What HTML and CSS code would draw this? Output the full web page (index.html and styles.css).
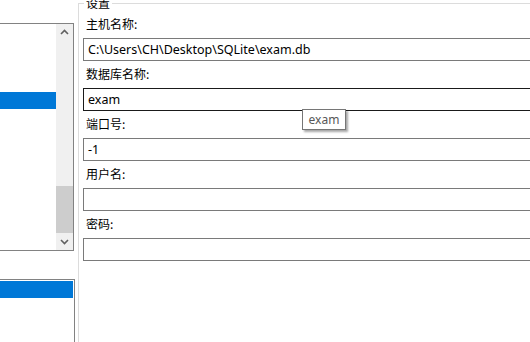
FILE: index.html
```html
<!DOCTYPE html>
<html lang="zh-CN">
<head>
    <meta charset="UTF-8">
    <meta name="viewport" content="width=device-width, initial-scale=1.0">
    <title>设置</title>
    <link rel="stylesheet" href="styles.css">
</head>
<body>
    <div class="window">
        <div class="left-panel">
            <div class="listbox top-list">
                <div class="list-items">
                    <div class="item selected"></div>
                </div>
                <div class="scrollbar">
                    <div class="scroll-btn">
                        <svg width="17" height="17" viewBox="0 0 17 17"><polyline points="5,10 8.5,6.5 12,10" fill="none" stroke="#606060" stroke-width="1.6"/></svg>
                    </div>
                    <div class="scroll-track"></div>
                    <div class="scroll-thumb"></div>
                    <div class="scroll-btn">
                        <svg width="17" height="17" viewBox="0 0 17 17"><polyline points="5,7 8.5,10.5 12,7" fill="none" stroke="#606060" stroke-width="1.6"/></svg>
                    </div>
                </div>
            </div>
            <div class="listbox bottom-list">
                <div class="item selected"></div>
            </div>
        </div>

        <fieldset class="settings">
            <legend>设置</legend>
            <div class="field">
                <label>主机名称:</label>
                <div class="input">C:\Users\CH\Desktop\SQLite\exam.db</div>
            </div>
            <div class="field">
                <label>数据库名称:</label>
                <div class="input focused">exam</div>
            </div>
            <div class="field">
                <label>端口号:</label>
                <div class="input">-1</div>
            </div>
            <div class="field">
                <label>用户名:</label>
                <div class="input"></div>
            </div>
            <div class="field">
                <label>密码:</label>
                <div class="input"></div>
            </div>
        </fieldset>

        <div class="tooltip">exam</div>
    </div>
</body>
</html>
```

FILE: styles.css
```css
body {
    margin: 0;
    padding: 0;
    background-color: #fff;
    font-family: "Noto Sans", "Noto Sans CJK SC", sans-serif;
    font-size: 12px;
    color: #000;
    overflow: hidden;
}

.window {
    position: relative;
    width: 530px;
    height: 342px;
    display: flex;
    overflow: hidden;
}

/* left side lists */
.left-panel {
    flex: 0 0 78px;
    display: flex;
    flex-direction: column;
    padding-top: 23px;
}

.listbox {
    width: 73px;
    border: 1px solid #828282;
    border-left: none;
    background-color: #fff;
}

.top-list {
    height: 226px;
    display: flex;
}

.list-items {
    flex: 1;
    padding-top: 68px;
}

.item {
    height: 17px;
}

.item.selected {
    background-color: #0078d7;
}

.scrollbar {
    width: 17px;
    background-color: #f0f0f0;
    display: flex;
    flex-direction: column;
}

.scroll-btn {
    height: 17px;
}

.scroll-btn svg {
    display: block;
}

.scroll-track {
    flex: 1;
}

.scroll-thumb {
    height: 47px;
    background-color: #cdcdcd;
}

.bottom-list {
    margin-top: 28px;
    flex: 1;
    border-bottom: none;
    padding: 1px 1px 0 0;
}

/* settings group */
.settings {
    flex: 0 0 470px;
    margin: -5px 0 0 0;
    padding: 5px 0 0 4px;
    border: 1px solid #dcdcdc;
    border-right: none;
    border-bottom: none;
    display: flex;
    flex-direction: column;
    gap: 5px;
}

.settings legend {
    font-family: "Noto Sans CJK SC", sans-serif;
    padding: 0 2px;
    margin-left: 1px;
    line-height: 16px;
    color: #000;
}

.field {
    display: flex;
    flex-direction: column;
}

.field label {
    font-family: "Noto Sans CJK SC", sans-serif;
    line-height: 16px;
    height: 16px;
    padding-left: 3px;
    margin-bottom: 6px;
}

.input {
    height: 21px;
    line-height: 21px;
    border: 1px solid #7a7a7a;
    padding-left: 4px;
    font-size: 12.5px;
    white-space: nowrap;
}

.input.focused {
    border-color: #1a1a1a;
}

.tooltip {
    position: absolute;
    left: 302px;
    top: 109px;
    width: 42px;
    height: 19px;
    line-height: 19px;
    border: 1px solid #767676;
    background-color: #fff;
    color: #575757;
    text-align: center;
    box-shadow: 2px 2px 2px rgba(0, 0, 0, 0.35);
}
```
